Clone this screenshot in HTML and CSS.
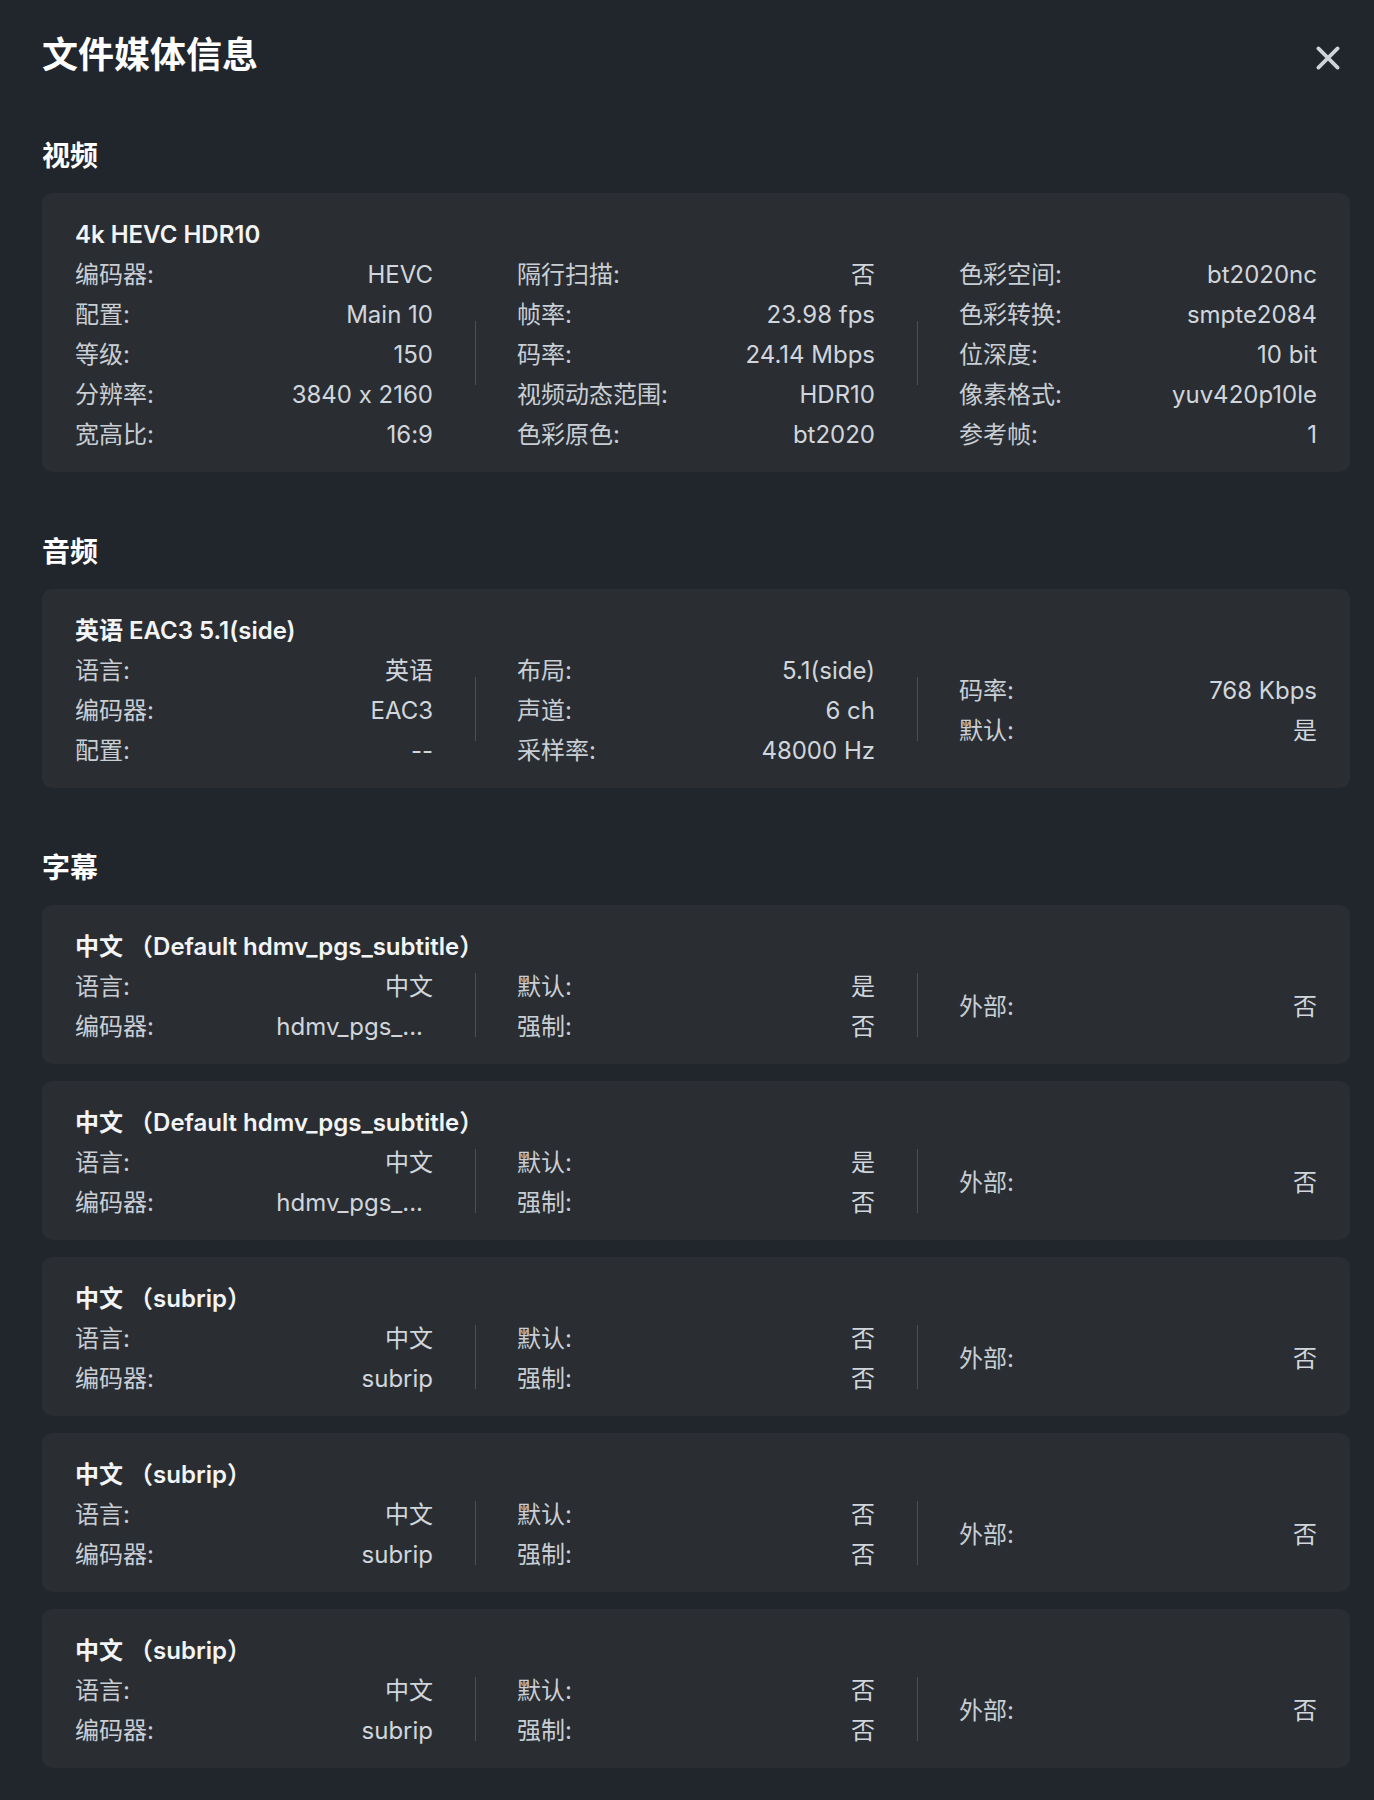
FILE: index.html
```html
<!DOCTYPE html>
<html lang="zh-CN">
<head>
<meta charset="utf-8">
<title>文件媒体信息</title>
<link rel="stylesheet" href="styles.css">
</head>
<body>
<div class="page">
  <div class="header">
    <h1 class="title">文件媒体信息</h1>
    <svg class="close" viewBox="0 0 24 24" aria-label="关闭"><path d="M2.4 2.4 L21.6 21.6 M21.6 2.4 L2.4 21.6" /></svg>
  </div>

  <section class="section first">
    <h2 class="section-title">视频</h2>
    <div class="card">
      <div class="card-title">4k HEVC HDR10</div>
      <div class="card-body">
        <div class="col">
          <div class="row"><span class="label">编码器:</span><span class="value">HEVC</span></div>
          <div class="row"><span class="label">配置:</span><span class="value">Main 10</span></div>
          <div class="row"><span class="label">等级:</span><span class="value">150</span></div>
          <div class="row"><span class="label">分辨率:</span><span class="value">3840 x 2160</span></div>
          <div class="row"><span class="label">宽高比:</span><span class="value">16:9</span></div>
        </div>
        <div class="divider"></div>
        <div class="col">
          <div class="row"><span class="label">隔行扫描:</span><span class="value">否</span></div>
          <div class="row"><span class="label">帧率:</span><span class="value">23.98 fps</span></div>
          <div class="row"><span class="label">码率:</span><span class="value">24.14 Mbps</span></div>
          <div class="row"><span class="label">视频动态范围:</span><span class="value">HDR10</span></div>
          <div class="row"><span class="label">色彩原色:</span><span class="value">bt2020</span></div>
        </div>
        <div class="divider"></div>
        <div class="col">
          <div class="row"><span class="label">色彩空间:</span><span class="value">bt2020nc</span></div>
          <div class="row"><span class="label">色彩转换:</span><span class="value">smpte2084</span></div>
          <div class="row"><span class="label">位深度:</span><span class="value">10 bit</span></div>
          <div class="row"><span class="label">像素格式:</span><span class="value">yuv420p10le</span></div>
          <div class="row"><span class="label">参考帧:</span><span class="value">1</span></div>
        </div>
      </div>
    </div>
  </section>

  <section class="section">
    <h2 class="section-title">音频</h2>
    <div class="card">
      <div class="card-title">英语 EAC3 5.1(side)</div>
      <div class="card-body">
        <div class="col">
          <div class="row"><span class="label">语言:</span><span class="value">英语</span></div>
          <div class="row"><span class="label">编码器:</span><span class="value">EAC3</span></div>
          <div class="row"><span class="label">配置:</span><span class="value">--</span></div>
        </div>
        <div class="divider"></div>
        <div class="col">
          <div class="row"><span class="label">布局:</span><span class="value">5.1(side)</span></div>
          <div class="row"><span class="label">声道:</span><span class="value">6 ch</span></div>
          <div class="row"><span class="label">采样率:</span><span class="value">48000 Hz</span></div>
        </div>
        <div class="divider"></div>
        <div class="col">
          <div class="row"><span class="label">码率:</span><span class="value">768 Kbps</span></div>
          <div class="row"><span class="label">默认:</span><span class="value">是</span></div>
        </div>
      </div>
    </div>
  </section>

  <section class="section">
    <h2 class="section-title">字幕</h2>
    <div class="card">
      <div class="card-title">中文 （Default hdmv_pgs_subtitle）</div>
      <div class="card-body">
        <div class="col">
          <div class="row"><span class="label">语言:</span><span class="value">中文</span></div>
          <div class="row"><span class="label">编码器:</span><span class="value truncated">hdmv_pgs_...</span></div>
        </div>
        <div class="divider"></div>
        <div class="col">
          <div class="row"><span class="label">默认:</span><span class="value">是</span></div>
          <div class="row"><span class="label">强制:</span><span class="value">否</span></div>
        </div>
        <div class="divider"></div>
        <div class="col">
          <div class="row"><span class="label">外部:</span><span class="value">否</span></div>
        </div>
      </div>
    </div>
    <div class="card">
      <div class="card-title">中文 （Default hdmv_pgs_subtitle）</div>
      <div class="card-body">
        <div class="col">
          <div class="row"><span class="label">语言:</span><span class="value">中文</span></div>
          <div class="row"><span class="label">编码器:</span><span class="value truncated">hdmv_pgs_...</span></div>
        </div>
        <div class="divider"></div>
        <div class="col">
          <div class="row"><span class="label">默认:</span><span class="value">是</span></div>
          <div class="row"><span class="label">强制:</span><span class="value">否</span></div>
        </div>
        <div class="divider"></div>
        <div class="col">
          <div class="row"><span class="label">外部:</span><span class="value">否</span></div>
        </div>
      </div>
    </div>
    <div class="card">
      <div class="card-title">中文 （subrip）</div>
      <div class="card-body">
        <div class="col">
          <div class="row"><span class="label">语言:</span><span class="value">中文</span></div>
          <div class="row"><span class="label">编码器:</span><span class="value">subrip</span></div>
        </div>
        <div class="divider"></div>
        <div class="col">
          <div class="row"><span class="label">默认:</span><span class="value">否</span></div>
          <div class="row"><span class="label">强制:</span><span class="value">否</span></div>
        </div>
        <div class="divider"></div>
        <div class="col">
          <div class="row"><span class="label">外部:</span><span class="value">否</span></div>
        </div>
      </div>
    </div>
    <div class="card">
      <div class="card-title">中文 （subrip）</div>
      <div class="card-body">
        <div class="col">
          <div class="row"><span class="label">语言:</span><span class="value">中文</span></div>
          <div class="row"><span class="label">编码器:</span><span class="value">subrip</span></div>
        </div>
        <div class="divider"></div>
        <div class="col">
          <div class="row"><span class="label">默认:</span><span class="value">否</span></div>
          <div class="row"><span class="label">强制:</span><span class="value">否</span></div>
        </div>
        <div class="divider"></div>
        <div class="col">
          <div class="row"><span class="label">外部:</span><span class="value">否</span></div>
        </div>
      </div>
    </div>
    <div class="card">
      <div class="card-title">中文 （subrip）</div>
      <div class="card-body">
        <div class="col">
          <div class="row"><span class="label">语言:</span><span class="value">中文</span></div>
          <div class="row"><span class="label">编码器:</span><span class="value">subrip</span></div>
        </div>
        <div class="divider"></div>
        <div class="col">
          <div class="row"><span class="label">默认:</span><span class="value">否</span></div>
          <div class="row"><span class="label">强制:</span><span class="value">否</span></div>
        </div>
        <div class="divider"></div>
        <div class="col">
          <div class="row"><span class="label">外部:</span><span class="value">否</span></div>
        </div>
      </div>
    </div>
  </section>
</div>
</body>
</html>
```
FILE: styles.css
```css
html, body {
  margin: 0;
  padding: 0;
  background: #21252c;
}

body {
  font-family: "Inter", "Noto Sans CJK SC", sans-serif;
  font-feature-settings: "calt" 0;
  color: #cfd4da;
}

.page {
  padding: 29px 24px 31px 42px;
}

.header {
  display: flex;
  justify-content: space-between;
  align-items: center;
  height: 50px;
}

.title {
  margin: 0;
  box-sizing: border-box;
  height: 50px;
  padding-top: 2px;
  font-size: 36px;
  line-height: 48px;
  font-weight: 700;
  color: #ffffff;
}

.close {
  width: 24px;
  height: 24px;
  margin: 7px 10px 0 0;
  flex: none;
}

.close path {
  fill: none;
  stroke: #cdd4dc;
  stroke-width: 3.7;
  stroke-linecap: round;
}

.section {
  margin-top: 59px;
}

.section.first {
  margin-top: 56px;
}

.section-title {
  margin: 0 0 18px;
  box-sizing: border-box;
  height: 40px;
  padding-top: 2px;
  font-size: 28px;
  line-height: 38px;
  font-weight: 700;
  color: #ffffff;
}

.card {
  background: #2a2e33;
  border-radius: 10px;
  padding: 20px 33px 19px;
}

.card + .card {
  margin-top: 17px;
}

.card-title {
  box-sizing: border-box;
  height: 40px;
  padding-top: 4px;
  font-size: 24px;
  line-height: 36px;
  font-weight: 600;
  color: #f3f4f6;
  white-space: nowrap;
}

.card-body {
  display: flex;
  align-items: center;
}

.col {
  flex: 1 1 0;
  min-width: 0;
}

.row {
  display: flex;
  justify-content: space-between;
  box-sizing: border-box;
  height: 40px;
  padding-top: 4px;
  line-height: 36px;
  font-size: 24px;
  white-space: nowrap;
}

.label {
  color: #c9ced5;
}

.value {
  color: #d1d6dc;
}

.value.truncated {
  padding-right: 10px;
}

.divider {
  flex: none;
  width: 1px;
  height: 64px;
  margin: 0 41.5px;
  background: #4b5057;
}
```
